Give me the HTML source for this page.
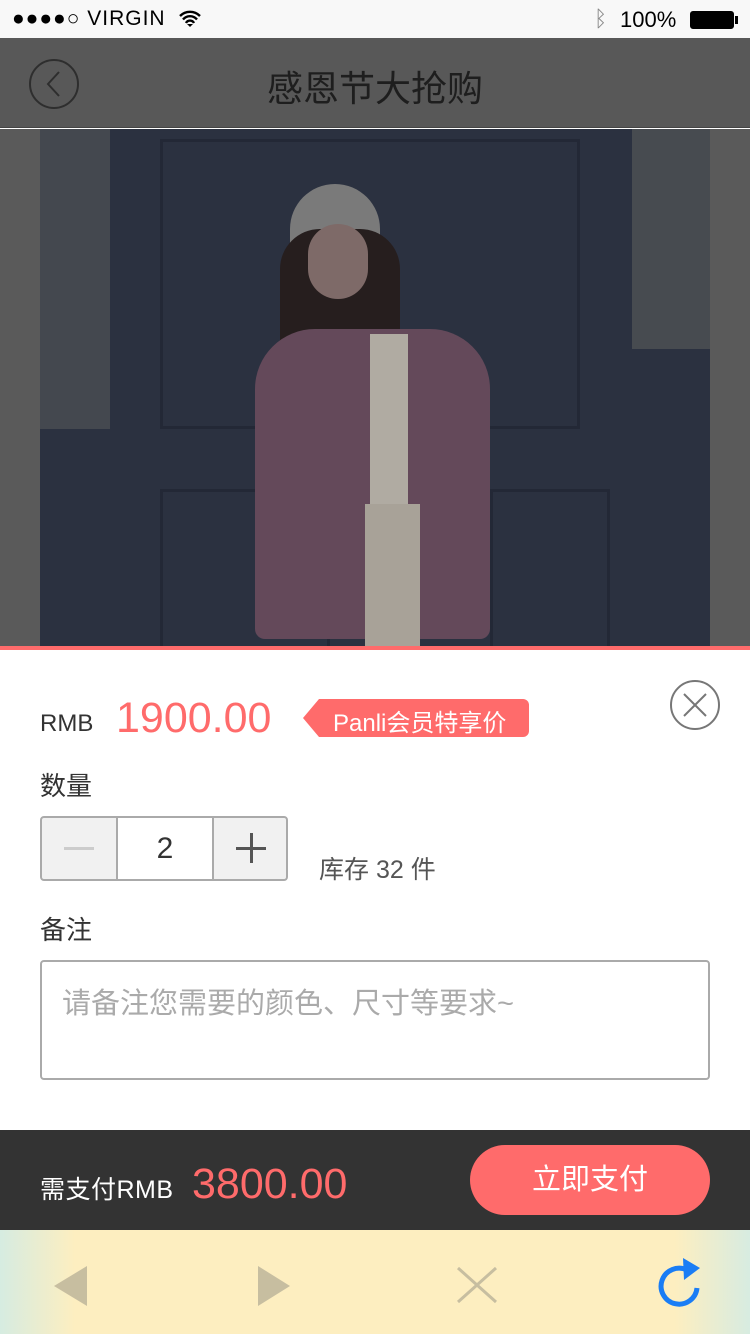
<!DOCTYPE html>
<html><head><meta charset="utf-8"><style>
*{margin:0;padding:0;box-sizing:border-box}
body{width:750px;height:1334px;overflow:hidden;position:relative;font-family:"Liberation Sans","Noto Sans CJK SC",sans-serif;background:#fff}
.abs{position:absolute}
</style></head><body>
<div class="abs" style="left:0;top:0;width:750px;height:38px;background:#f8f8f8;font-size:21px;color:#000">
 <span class="abs" style="left:12px;top:7px;letter-spacing:1px">●●●●○ VIRGIN</span>
 <svg class="abs" style="left:178px;top:10px" width="24" height="18" viewBox="0 0 24 18"><path d="M2 6a14 14 0 0 1 20 0M5 9.5a9 9 0 0 1 14 0M8 13a4.5 4.5 0 0 1 8 0" stroke="#000" stroke-width="2.4" fill="none"/><path d="M12 17l-3-3h6z"/></svg>
 <span class="abs" style="left:594px;top:6px;color:#888;font-size:22px">ᛒ</span>
 <span class="abs" style="left:620px;top:7px;font-size:22px">100%</span>
 <div class="abs" style="left:690px;top:11px;width:44px;height:18px;border:2px solid #000;background:#000;border-radius:3px"></div>
 <div class="abs" style="left:735px;top:16px;width:3px;height:8px;background:#000"></div>
</div>
<div class="abs" style="left:0;top:38px;width:750px;height:90px;background:#585858;border-bottom:1px solid #444">
 <div class="abs" style="left:29px;top:21px;width:50px;height:50px;border:2px solid #2e2e2e;border-radius:50%"></div>
 <svg class="abs" style="left:29px;top:21px" width="50" height="50"><path d="M30 13L19 25l11 12" stroke="#2e2e2e" stroke-width="2" fill="none"/></svg>
 <div class="abs" style="left:0;top:22px;width:750px;text-align:center;font-size:36px;color:#1e1e1e">感恩节大抢购</div>
</div>
<div class="abs" style="left:0;top:129px;width:750px;height:517px;background:#5a5a5a">
 <div class="abs" style="left:40px;top:0;width:670px;height:517px;background:#2b3140;overflow:hidden">
  <div class="abs" style="left:0;top:0;width:70px;height:300px;background:#44484f"></div>
  <div class="abs" style="left:592px;top:0;width:78px;height:220px;background:#474b50"></div>
  <div class="abs" style="left:120px;top:10px;width:420px;height:290px;border:3px solid #232836"></div>
  <div class="abs" style="left:120px;top:360px;width:170px;height:170px;border:3px solid #232836"></div>
  <div class="abs" style="left:450px;top:360px;width:120px;height:170px;border:3px solid #232836"></div>
  <div class="abs" style="left:250px;top:55px;width:90px;height:70px;background:#7a7a7a;border-radius:45px 45px 10px 10px"></div>
  <div class="abs" style="left:240px;top:100px;width:120px;height:160px;background:#261e1e;border-radius:40px"></div>
  <div class="abs" style="left:268px;top:95px;width:60px;height:75px;background:#7e6a68;border-radius:30px"></div>
  <div class="abs" style="left:215px;top:200px;width:235px;height:310px;background:#64495a;border-radius:60px 60px 10px 10px"></div>
  <div class="abs" style="left:330px;top:205px;width:38px;height:170px;background:#b0aba2"></div>
  <div class="abs" style="left:325px;top:375px;width:55px;height:145px;background:#a8a298"></div>
 </div>
</div>
<div class="abs" style="left:0;top:646px;width:750px;height:4px;background:#ff6b6b"></div>
<div class="abs" style="left:0;top:650px;width:750px;height:480px;background:#fff">
 <span class="abs" style="left:40px;top:60px;font-size:24px;color:#333">RMB</span>
 <span class="abs" style="left:116px;top:44px;font-size:43px;color:#ff6b6b">1900.00</span>
 <svg class="abs" style="left:303px;top:49px" width="226" height="38"><path d="M16 0H220a6 6 0 0 1 6 6V32a6 6 0 0 1-6 6H16L0 19z" fill="#ff6b6b"/></svg>
 <span class="abs" style="left:333px;top:53px;font-size:24px;color:#fff">Panli会员特享价</span>
 <div class="abs" style="left:670px;top:30px;width:50px;height:50px;border:2px solid #777;border-radius:50%"></div>
 <svg class="abs" style="left:670px;top:30px" width="50" height="50"><path d="M14 14L36 36M36 14L14 36" stroke="#777" stroke-width="2"/></svg>
 <span class="abs" style="left:40px;top:116px;font-size:26px;color:#333">数量</span>
 <div class="abs" style="left:40px;top:166px;width:248px;height:65px;border:2px solid #aaa;border-radius:4px;overflow:hidden;background:#f1f1f1">
  <div class="abs" style="left:74px;top:0;width:98px;height:61px;background:#fff;border-left:2px solid #aaa;border-right:2px solid #aaa;text-align:center;font-size:30px;line-height:61px;color:#333">2</div>
  <div class="abs" style="left:22px;top:29px;width:30px;height:3px;background:#ccc"></div>
  <div class="abs" style="left:194px;top:29px;width:30px;height:3px;background:#555"></div>
  <div class="abs" style="left:208px;top:15px;width:3px;height:30px;background:#555"></div>
 </div>
 <span class="abs" style="left:319px;top:200px;font-size:25px;color:#555">库存 32 件</span>
 <span class="abs" style="left:40px;top:260px;font-size:26px;color:#333">备注</span>
 <div class="abs" style="left:40px;top:310px;width:670px;height:120px;border:2px solid #aaa;border-radius:4px">
  <span class="abs" style="left:20px;top:18px;font-size:29px;color:#aaa">请备注您需要的颜色、尺寸等要求~</span>
 </div>
</div>
<div class="abs" style="left:0;top:1130px;width:750px;height:100px;background:#333">
 <span class="abs" style="left:40px;top:40px;font-size:25px;color:#fff;letter-spacing:0.5px">需支付RMB</span>
 <span class="abs" style="left:192px;top:30px;font-size:43px;color:#ff6b6b">3800.00</span>
 <div class="abs" style="left:470px;top:15px;width:240px;height:70px;background:#ff6b6b;border-radius:35px;text-align:center;line-height:70px;font-size:29px;color:#fff">立即支付</div>
</div>
<div class="abs" style="left:0;top:1230px;width:750px;height:104px;background:linear-gradient(90deg,#d6ece1,#fdeec0 10%,#fdeec0 90%,#d7ece1)">
 <svg class="abs" style="left:0;top:0" width="750" height="104"><path d="M54 56L87 36V76z" fill="#c7bea0"/><path d="M290 56L258 36V76z" fill="#c7bea0"/><path d="M458 38L496 72M496 38L458 72" stroke="#c7bea0" stroke-width="3"/><path d="M697 58a18 18 0 1 1-10-18" stroke="#1a7df5" stroke-width="5" fill="none"/><path d="M683 28L700 38L684 50z" fill="#1a7df5"/></svg>
</div>
</body></html>
